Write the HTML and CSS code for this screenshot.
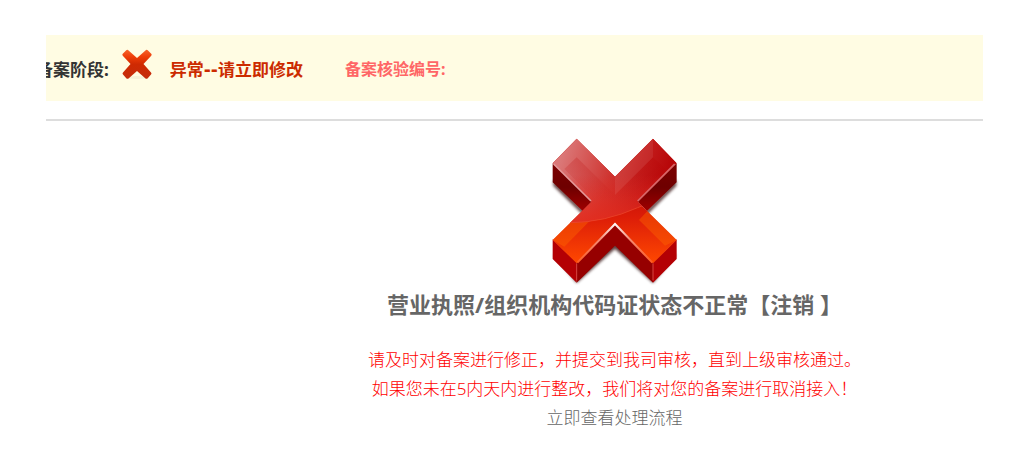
FILE: index.html
```html
<!DOCTYPE html>
<html lang="zh-CN">
<head>
    <meta charset="UTF-8">
    <meta name="viewport" content="width=device-width, initial-scale=1.0">
    <title>备案核验</title>
    <link rel="stylesheet" href="styles.css">
</head>
<body>

<div class="page">
    <div class="status-bar">
        <span class="stage-label">备案阶段:</span>
        <svg class="stage-icon" viewBox="0 0 60 62" aria-hidden="true">
            <defs>
                <linearGradient id="smallRed" x1="0" y1="0" x2="0" y2="1">
                    <stop offset="0" stop-color="#f5632c"/>
                    <stop offset="0.25" stop-color="#ee3d08"/>
                    <stop offset="0.5" stop-color="#cf2a02"/>
                    <stop offset="1" stop-color="#c42c0c"/>
                </linearGradient>
            </defs>
            <ellipse cx="30" cy="57" rx="24" ry="3" fill="#f6f1d8"/>
            <path d="M12 2 L30 18 L48 2 Q50 1 52 3 L59 10 Q60 12 58 14 L43 30 L58 47 Q60 49 58 51 L51 59 Q49 60 47 59 L30 44 L13 59 Q11 60 9 59 L2 51 Q0 49 2 47 L17 30 L2 14 Q0 12 1 10 L8 3 Q10 1 12 2 Z" fill="url(#smallRed)"/>
        </svg>
        <span class="stage-state">异常--请立即修改</span>
        <span class="check-no">备案核验编号:</span>
    </div>

    <div class="result">
        <svg class="result-icon" viewBox="45 36 390 450" aria-hidden="true">
            <defs>
                <linearGradient id="face" gradientUnits="userSpaceOnUse" x1="0" y1="180" x2="0" y2="415">
                    <stop offset="0" stop-color="#c01008"/>
                    <stop offset="0.4" stop-color="#dc1c08"/>
                    <stop offset="1" stop-color="#ff4800"/>
                </linearGradient>
                <linearGradient id="gloss" gradientUnits="userSpaceOnUse" x1="85" y1="75" x2="385" y2="170">
                    <stop offset="0" stop-color="#db7878"/>
                    <stop offset="0.5" stop-color="#cf3430"/>
                    <stop offset="1" stop-color="#b8080a"/>
                </linearGradient>
                <linearGradient id="glow" gradientUnits="userSpaceOnUse" x1="0" y1="150" x2="0" y2="295">
                    <stop offset="0" stop-color="#e62a20" stop-opacity="0"/>
                    <stop offset="1" stop-color="#e42c1c" stop-opacity="0.9"/>
                </linearGradient>
                <linearGradient id="inner" gradientUnits="userSpaceOnUse" x1="0" y1="97" x2="0" y2="225">
                    <stop offset="0" stop-color="#b80000" stop-opacity="0.22"/>
                    <stop offset="1" stop-color="#b80000" stop-opacity="0"/>
                </linearGradient>
                <linearGradient id="sideTop" gradientUnits="userSpaceOnUse" x1="0" y1="115" x2="0" y2="258">
                    <stop offset="0" stop-color="#7c0000"/>
                    <stop offset="0.5" stop-color="#6e0000"/>
                    <stop offset="1" stop-color="#a00000"/>
                </linearGradient>
                <linearGradient id="edge" gradientUnits="userSpaceOnUse" x1="0" y1="295" x2="0" y2="415">
                    <stop offset="0" stop-color="#ffffff"/>
                    <stop offset="0.4" stop-color="#f48a74"/>
                    <stop offset="1" stop-color="#ff5a20"/>
                </linearGradient>
                <clipPath id="faceClip">
                    <path d="M125 41 L240 155 L354 41 L425 115 L308 230 L425 345 L354 415 L240 295 L125 415 L53 345 L170 230 L53 115 Z"/>
                </clipPath>
                <filter id="soft" x="-10%" y="-10%" width="120%" height="120%">
                    <feGaussianBlur stdDeviation="4"/>
                </filter>
            </defs>
            <!-- shadow -->
            <path d="M55 165 L150 260 L150 275 L55 182 Z M424 165 L330 260 L330 275 L424 182 Z M56 390 L125 474 L240 372 L354 474 L423 390 L240 345 Z" fill="#2a0000" opacity="0.75" filter="url(#soft)"/>
            <!-- sides -->
            <path d="M53 115 L170 230 L143 258 L53 172 Z M425 115 L308 230 L336 258 L425 172 Z" fill="url(#sideTop)"/>
            <path d="M125 413 L240 293 L354 413 L354 473 L240 362 L125 473 Z" fill="#960000"/>
            <path d="M53 343 L125 413 L125 473 L53 402 Z M425 343 L354 413 L354 473 L425 402 Z" fill="#b40004"/>
            <!-- front face -->
            <path d="M125 41 L240 155 L354 41 L425 115 L308 230 L425 345 L354 415 L240 295 L125 415 L53 345 L170 230 L53 115 Z" fill="url(#face)"/>
            <g clip-path="url(#faceClip)">
                <path d="M135 255 L167 285 L88 365 L53 345 Z M340 255 L312 285 L390 362 L425 345 Z" fill="#ff6a00" opacity="0.4"/>
                <path d="M40 30 H440 V200 Q390 220 308 248 Q210 292 105 293 L40 293 Z" fill="url(#gloss)"/>
                <path d="M40 150 H440 V200 Q390 220 308 248 Q210 292 105 293 L40 293 Z" fill="url(#glow)"/>
                <path d="M125 97 L240 210 L354 97 L391 132 L296 227 L184 227 L88 132 Z" fill="url(#inner)"/>
                <path d="M240 155 L240 210 L354 97 L354 41 Z" fill="#ffffff" opacity="0.07"/>
                <path d="M105 293 Q210 292 308 248 L335 237" fill="none" stroke="#ee4a2c" stroke-width="2"/>
            </g>
            <!-- light edges -->
            <path d="M56 117 L168 228" fill="none" stroke="#e4999a" stroke-width="5"/>
            <path d="M419 117 L308 228" fill="none" stroke="#d8686a" stroke-width="5"/>
            <path d="M127 413 L240 297 L352 413" fill="none" stroke="url(#edge)" stroke-width="6"/>
            <path d="M125 415 V466 M354 415 V466" fill="none" stroke="#d84440" stroke-width="3"/>
        </svg>
        <h1 class="result-title">营业执照/组织机构代码证状态不正常【注销 】</h1>
        <p class="result-text">请及时对备案进行修正，并提交到我司审核，直到上级审核通过。</p>
        <p class="result-text">如果您未在5内天内进行整改，我们将对您的备案进行取消接入！</p>
        <a class="result-link" href="#flow">立即查看处理流程</a>
    </div>
</div>

</body>
</html>
```
FILE: styles.css
```css
body {
    margin: 0;
    background-color: #ffffff;
    font-family: "Noto Sans", "Noto Sans CJK SC", sans-serif;
    font-size: 17px;
    color: #666666;
}

.page {
    padding: 35px 41px 24px 46px;
}

.status-bar {
    display: flex;
    align-items: center;
    height: 66px;
    background-color: #fffce3;
    font-weight: bold;
    white-space: nowrap;
    overflow: hidden; /* the stage label runs under the left edge */
}

.stage-label {
    margin-left: -10px;
    color: #333333;
}

.stage-icon {
    width: 30px;
    height: 31px;
    margin: 0 18px 8px 13px;
}

.stage-state {
    font-family: "DejaVu Sans", "Noto Sans CJK SC", sans-serif;
    color: #cc2b00;
}

.check-no {
    margin-left: 42px;
    font-size: 16px;
    color: #ff6666;
}

.result {
    display: flex;
    flex-direction: column;
    align-items: center;
    margin-top: 18px;
    padding: 16px 0 0 200px;
    border-top: 2px solid #dddddd;
    text-align: center;
}

.result-icon {
    width: 130px;
    height: 150px;
}

.result-title {
    margin: 0 0 24px;
    font-size: 22px;
    line-height: 34px;
    font-weight: bold;
}

.result-text {
    margin: 0;
    line-height: 29px;
    font-weight: 300;
    color: #ff0000;
}

.result-link {
    line-height: 30px;
    font-weight: 300;
    color: #666666;
    text-decoration: none;
}
```
